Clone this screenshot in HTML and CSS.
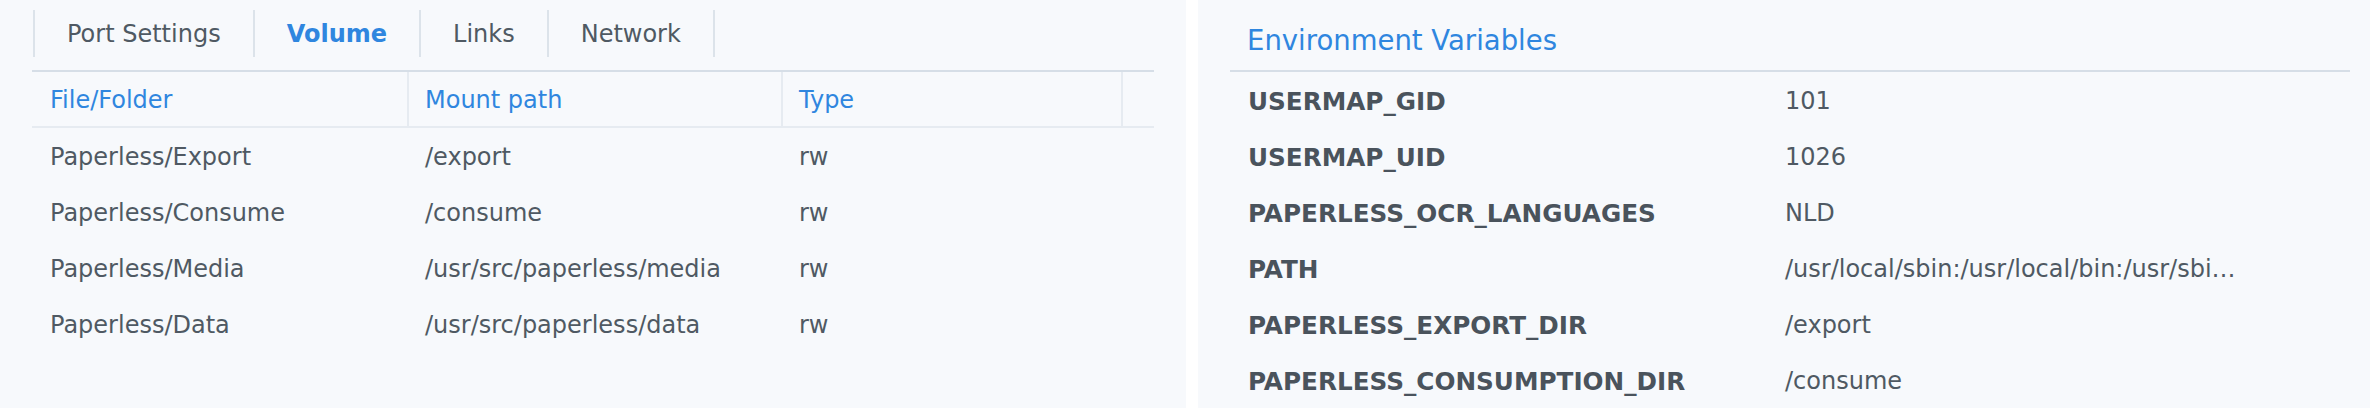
FILE: index.html
```html
<!DOCTYPE html>
<html lang="en">
<head>
<meta charset="utf-8">
<title>Container settings</title>
<link rel="stylesheet" href="styles.css">
</head>
<body>
<div class="page">
  <section class="panel panel-left">
    <nav class="tabs">
      <div class="tab">Port Settings</div>
      <div class="tab tab-active">Volume</div>
      <div class="tab">Links</div>
      <div class="tab">Network</div>
    </nav>
    <div class="grid vol">
      <div class="th">File/Folder</div>
      <div class="th">Mount path</div>
      <div class="th">Type</div>
      <div class="th th-end"></div>

      <div class="td">Paperless/Export</div><div class="td">/export</div><div class="td">rw</div><div class="td"></div>
      <div class="td">Paperless/Consume</div><div class="td">/consume</div><div class="td">rw</div><div class="td"></div>
      <div class="td">Paperless/Media</div><div class="td">/usr/src/paperless/media</div><div class="td">rw</div><div class="td"></div>
      <div class="td">Paperless/Data</div><div class="td">/usr/src/paperless/data</div><div class="td">rw</div><div class="td"></div>
    </div>
  </section>
  <div class="divider"></div>
  <section class="panel panel-right">
    <h2 class="heading">Environment Variables</h2>
    <div class="env">
      <div class="key">USERMAP_GID</div><div class="val">101</div>
      <div class="key">USERMAP_UID</div><div class="val">1026</div>
      <div class="key">PAPERLESS_OCR_LANGUAGES</div><div class="val">NLD</div>
      <div class="key">PATH</div><div class="val" title="/usr/local/sbin:/usr/local/bin:/usr/sbin:/usr/bin:/sbin:/bin">/usr/local/sbin:/usr/local/bin:/usr/sbi…</div>
      <div class="key">PAPERLESS_EXPORT_DIR</div><div class="val">/export</div>
      <div class="key">PAPERLESS_CONSUMPTION_DIR</div><div class="val">/consume</div>
    </div>
  </section>
</div>
</body>
</html>
```

FILE: styles.css
```css
* { box-sizing: border-box; }

html, body {
  margin: 0;
  padding: 0;
  width: 2370px;
  height: 408px;
  overflow: hidden;
  background: #f7f9fc;
  font-family: "DejaVu Sans", Verdana, sans-serif;
  font-size: 24px;
  color: #4f5963;
}

.page {
  display: flex;
  height: 408px;
}

.panel-left {
  width: 1186px;
  padding: 10px 0 0 32px;
}

.divider {
  width: 12px;
  background: #ffffff;
}

.panel-right {
  flex: 1;
  padding: 0 20px 0 32px;
}

/* Tabs */
.tabs {
  display: flex;
  height: 47px;
  margin-left: 1px;
  border-left: 2px solid #dce3ea;
}

.tab {
  padding: 2px 32px 0;
  line-height: 45px;
  border-right: 2px solid #dce3ea;
  color: #4f5963;
  white-space: nowrap;
}

.tab-active {
  color: #2f86df;
  font-weight: bold;
}

/* Volume table */
.grid.vol {
  margin-top: 13px;
  width: 1122px;
  display: grid;
  grid-template-columns: 375px 374px 340px 1fr;
  grid-auto-rows: 56px;
  border-top: 2px solid #d6dee7;
}

.th {
  height: 56px;
  display: flex;
  align-items: center;
  padding-top: 2px;
  color: #2f86df;
  border-bottom: 2px solid #e6ebf1;
  padding-left: 18px;
}

.th + .th {
  border-left: 2px solid #e6ebf1;
  padding-left: 16px;
}

.td {
  display: flex;
  align-items: center;
  padding-top: 2px;
  padding-left: 18px;
  white-space: nowrap;
}

/* Environment variables */
.heading {
  margin: 0;
  height: 72px;
  padding: 10px 0 0 17px;
  display: flex;
  align-items: center;
  font-size: 27.5px;
  font-weight: normal;
  color: #2f86df;
  border-bottom: 2px solid #d6dee7;
}

.env {
  display: grid;
  grid-template-columns: 555px 1fr;
  grid-auto-rows: 56px;
}

.key {
  display: flex;
  align-items: center;
  padding-top: 2px;
  padding-left: 18px;
  font-weight: bold;
  font-size: 24.7px;
  color: #4a535c;
  white-space: nowrap;
}

.val {
  display: flex;
  align-items: center;
  padding-top: 2px;
  white-space: nowrap;
}
```
